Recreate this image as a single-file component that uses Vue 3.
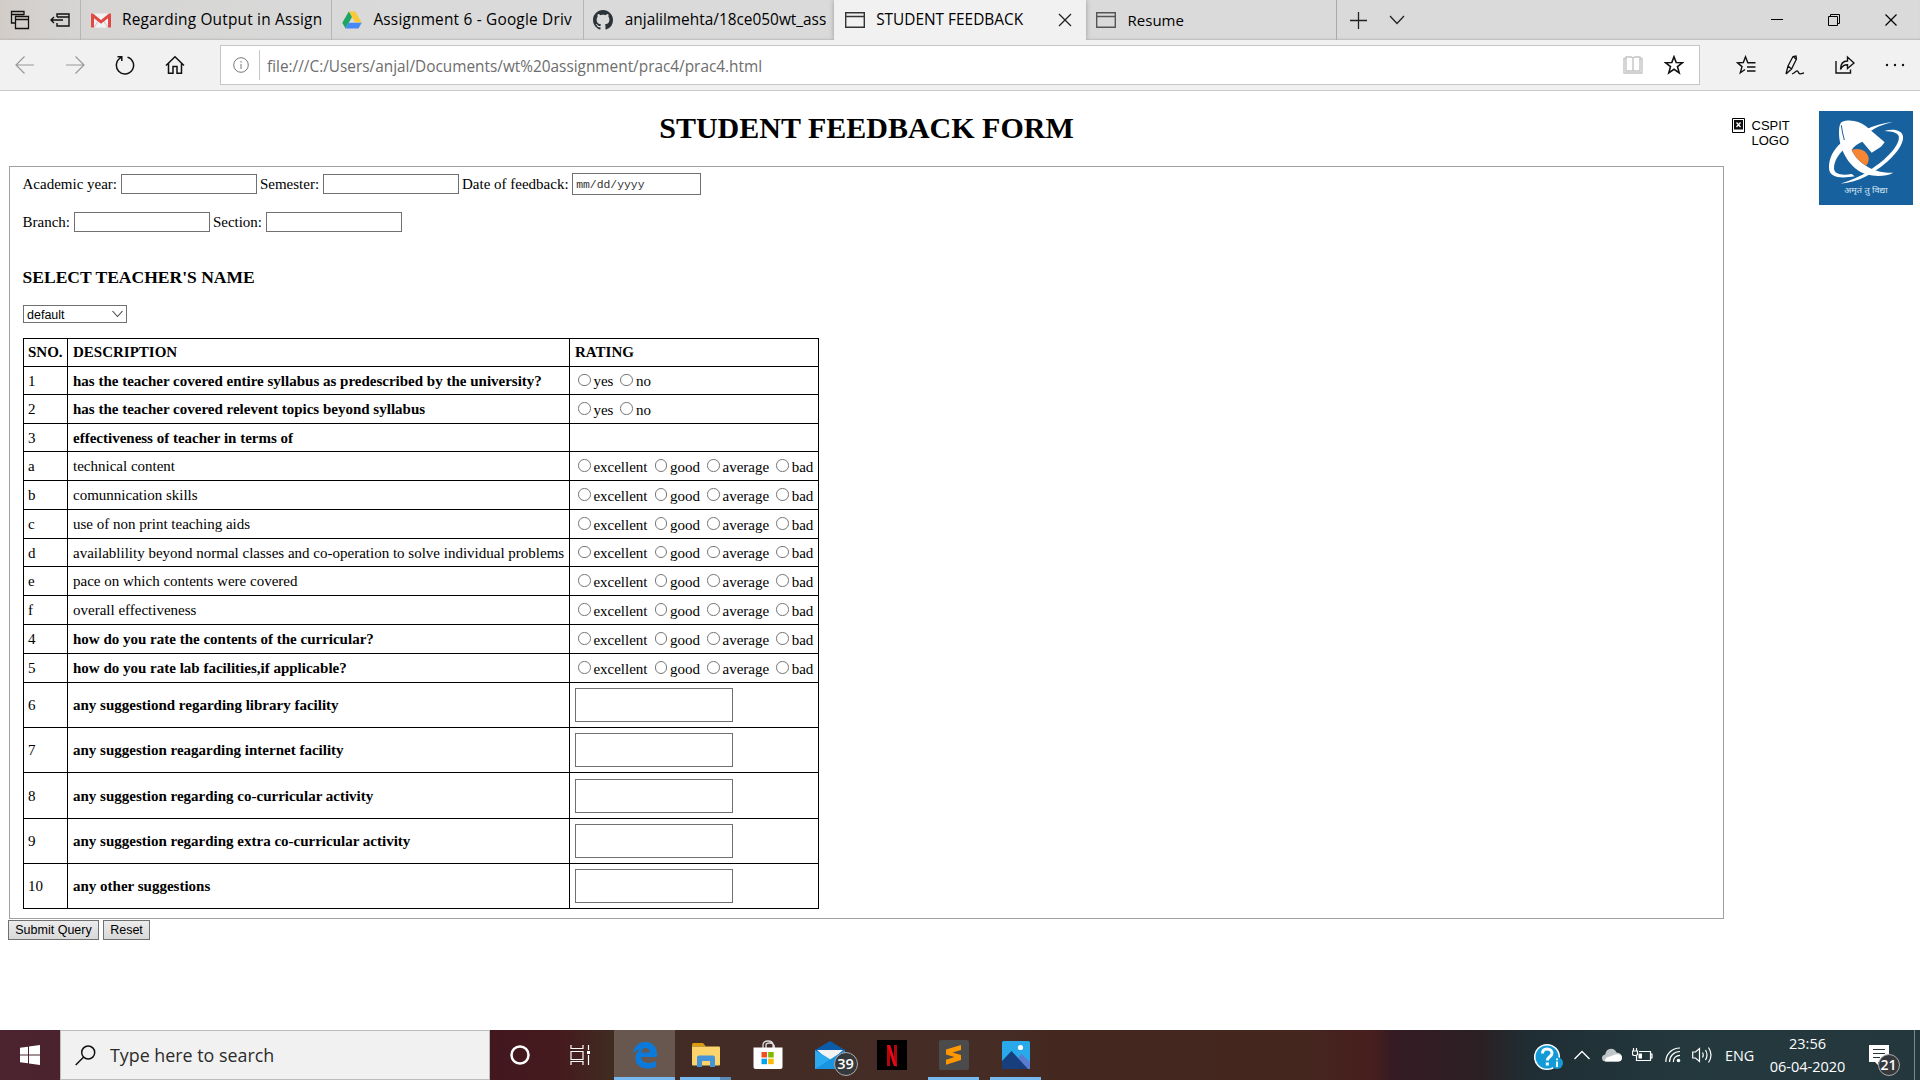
<script setup>
const four = ['excellent', 'good', 'average', 'bad']
const two = ['yes', 'no']
const rows = [
  { n: '1', t: 'has the teacher covered entire syllabus as predescribed by the university?', b: true, o: two, h: 28 },
  { n: '2', t: 'has the teacher covered relevent topics beyond syllabus', b: true, o: two, h: 29 },
  { n: '3', t: 'effectiveness of teacher in terms of', b: true, h: 28 },
  { n: 'a', t: 'technical content', o: four, h: 29 },
  { n: 'b', t: 'comunnication skills', o: four, h: 29 },
  { n: 'c', t: 'use of non print teaching aids', o: four, h: 29 },
  { n: 'd', t: 'availablility beyond normal classes and co-operation to solve individual problems', o: four, h: 28 },
  { n: 'e', t: 'pace on which contents were covered', o: four, h: 29 },
  { n: 'f', t: 'overall effectiveness', o: four, h: 29 },
  { n: '4', t: 'how do you rate the contents of the curricular?', b: true, o: four, h: 29 },
  { n: '5', t: 'how do you rate lab facilities,if applicable?', b: true, o: four, h: 29 },
  { n: '6', t: 'any suggestiond regarding library facility', b: true, area: true, h: 45 },
  { n: '7', t: 'any suggestion reagarding internet facility', b: true, area: true, h: 45 },
  { n: '8', t: 'any suggestion regarding co-curricular activity', b: true, area: true, h: 46 },
  { n: '9', t: 'any suggestion regarding extra co-curricular activity', b: true, area: true, h: 45 },
  { n: '10', t: 'any other suggestions', b: true, area: true, h: 45 },
]
</script>

<template>
  <div class="screen">
    <div class="tabbar">
      <div class="lead">
        <svg class="ic" width="20" height="20" viewBox="0 0 20 20" fill="none" stroke="#111" stroke-width="1.3"><path d="M5 13H1.500V1.500H14V5M1.500 4.500H14M5.500 6.500H18.500V18.500H5.500zM5.500 9.500H18.500" /></svg>
        <svg class="ic" width="20" height="14" viewBox="0 0 20 14" fill="none" stroke="#111" stroke-width="1.4"><path d="M7 4V1H19V13H7V10M7 4H19M1 7H13M4 4L1 7L4 10" /></svg>
      </div>
      <div class="tab">
        <svg class="fav" width="20" height="20" viewBox="0 0 20 20"><path d="M0 3.500H20V17.500H0z" fill="#f2f2f2" /><path d="M3 17.500L8 10M17 17.500L12 10" stroke="#d8b9b6" stroke-width="1" /><path d="M0 17.500V3.500H2L10 10L18 3.500H20V17.500H17V8.200L10 13.700L3 8.200V17.500z" fill="#e04a45" /></svg>
        <span class="tt t1">Regarding Output in Assign</span>
      </div>
      <div class="tab">
        <svg class="fav" width="20" height="20" viewBox="0 0 20 20"><path d="M6.800 1.500H13.200L19.700 12.500H13.200z" fill="#fbc934" /><path d="M6.800 1.500L10 7L3.500 18.500L.3 12.800z" fill="#1fa463" /><path d="M6.800 12.800H19.700L16.500 18.500H3.500z" fill="#4688f4" /></svg>
        <span class="tt t2">Assignment 6 - Google Driv</span>
      </div>
      <div class="tab">
        <svg class="fav" width="20" height="20" viewBox="0 0 16 16"><path fill="#2c3338" d="M8 0C3.580 0 0 3.580 0 8c0 3.540 2.290 6.530 5.470 7.590.4.070.55-.17.55-.38 0-.19-.01-.82-.01-1.490-2.010.37-2.530-.49-2.690-.94-.09-.23-.48-.94-.82-1.130-.28-.15-.68-.52-.01-.53.63-.01 1.080.58 1.230.82.72 1.210 1.870.87 2.330.66.07-.52.28-.87.510-1.070-1.780-.2-3.640-.89-3.640-3.950 0-.87.310-1.590.82-2.150-.08-.2-.36-1.020.08-2.120 0 0 .67-.21 2.200.82.640-.18 1.320-.27 2-.27s1.360.09 2 .27c1.530-1.040 2.200-.82 2.200-.82.440 1.100.160 1.920.08 2.120.510.560.82 1.270.82 2.150 0 3.070-1.870 3.750-3.650 3.950.29.25.54.73.54 1.480 0 1.070-.01 1.930-.01 2.200 0 .21.15.46.55.38A8.010 8.010 0 0 0 16 8c0-4.420-3.580-8-8-8z" /></svg>
        <span class="tt t3">anjalilmehta/18ce050wt_ass</span>
      </div>
      <div class="tab on">
        <svg class="fav" width="20" height="18" viewBox="0 0 20 18" fill="none" stroke="#333" stroke-width="1.400"><path d="M.7 1.700H19.300V16.300H.7zM.7 5.500H19.300" /></svg>
        <span class="tt t4">STUDENT FEEDBACK</span>
        <svg class="x" width="14" height="14" viewBox="0 0 14 14" stroke="#222" stroke-width="1.300"><path d="M1 1L13 13M13 1L1 13" /></svg>
      </div>
      <div class="tab">
        <svg class="fav" width="20" height="18" viewBox="0 0 20 18" fill="none" stroke="#555" stroke-width="1.400"><path d="M.7 1.700H19.300V16.300H.7zM.7 5.500H19.300" /></svg>
        <span class="tt t5">Resume</span>
      </div>
      <svg class="plus" width="17" height="17" viewBox="0 0 17 17" stroke="#222" stroke-width="1.300"><path d="M0 8.500H17M8.500 0V17" /></svg>
      <svg class="down" width="16" height="10" viewBox="0 0 16 10" fill="none" stroke="#222" stroke-width="1.300"><path d="M1 1L8 8.500L15 1" /></svg>
      <div class="win">
        <svg width="12" height="12" viewBox="0 0 12 12" stroke="#000"><path d="M0 5.500H12" /></svg>
        <svg width="12" height="12" viewBox="0 0 12 12" fill="none" stroke="#000"><path d="M.5 2.500H9.500V11.500H.5zM2.500 2.500V.5H11.500V9.500H9.500" /></svg>
        <svg width="12" height="12" viewBox="0 0 12 12" stroke="#000" stroke-width="1.200"><path d="M.5.5L11.500 11.500M11.500.5L.5 11.500" /></svg>
      </div>
    </div>

    <div class="toolbar">
      <div class="nav">
        <svg width="20" height="20" viewBox="0 0 20 20" fill="none" stroke="#999" stroke-width="1.200"><path d="M19 10H1M9.500 1.500L1 10L9.500 18.500" /></svg>
        <svg width="20" height="20" viewBox="0 0 20 20" fill="none" stroke="#999" stroke-width="1.200"><path d="M1 10H19M10.500 1.500L19 10L10.500 18.500" /></svg>
        <svg width="20" height="20" viewBox="0 0 20 20" fill="none" stroke="#111" stroke-width="1.500"><path d="M12.500 2.100A8.600 8.600 0 1 1 6 2.700M2.500 1.800H6.800V6" /></svg>
        <svg width="20" height="20" viewBox="0 0 20 20" fill="none" stroke="#111" stroke-width="1.500"><path d="M1 10.500L10 1.800L19 10.500M3.500 8.500V18.200H8V11.500H12V18.200H16.500V8.500" /></svg>
      </div>
      <div class="addr">
        <svg class="info" width="16" height="16" viewBox="0 0 16 16" fill="none" stroke="#777"><circle cx="8" cy="8" r="7.300" /><path d="M8 7V12M8 4V5.500" /></svg>
        <i class="sep"></i>
        <span class="url">file:///C:/Users/anjal/Documents/wt%20assignment/prac4/prac4.html</span>
        <svg class="book" width="20" height="18" viewBox="0 0 20 18" fill="none" stroke="#c4c4c4" stroke-width="1.400"><path d="M3 2.500V1H8.500L10 2.200L11.500 1H17V2.500M10 2.200V15.500M3 2.500H1V17H19V2.500H17V15H3V2.500" /></svg>
        <svg class="star" width="20" height="20" viewBox="0 0 20 20" fill="none" stroke="#111" stroke-width="1.600"><path d="M10 1.800L12.200 7.500L18.300 7.800L13.500 11.600L15.200 17.800L10 14.300L4.800 17.800L6.500 11.600L1.700 7.800L7.800 7.500z" /></svg>
      </div>
      <div class="acts">
        <svg width="20" height="20" viewBox="0 0 20 20" fill="none" stroke="#111" stroke-width="1.400"><path d="M19.500 7.800H11.800L9.500 1.800L7.300 7.500L1.500 7.800L6 11.600L4.300 17.800L9 14.500M11 12H19.500M11 16H19.500" /></svg>
        <svg width="20" height="20" viewBox="0 0 20 20" fill="none" stroke="#111" stroke-width="1.300"><path d="M1 19L3 11L8 1.500L11 1L11.500 4L6.500 14L1 19M8 1.500L11 4M3 11L6.500 14M7 19C10 18 11 15.500 12.500 16C14 17 13 18.500 15 18.800C17 19 17.500 18 19 18" /></svg>
        <svg width="20" height="20" viewBox="0 0 20 20" fill="none" stroke="#111" stroke-width="1.400"><path d="M1 6V18H15.500V14.500M5.500 14.500C5.500 9 8 6 12.500 6V2L19 8L12.500 13.500V9.800C9 9.800 7 11 5.500 14.500z" /></svg>
        <svg width="20" height="20" viewBox="0 0 20 20" fill="#111"><circle cx="2" cy="10" r="1.200" /><circle cx="10" cy="10" r="1.200" /><circle cx="18" cy="10" r="1.200" /></svg>
      </div>
    </div>

    <div class="page">
      <div class="main">
        <h1>STUDENT FEEDBACK FORM</h1>
        <div class="fs">
          <div class="line l1">Academic year:<i class="inp"></i>Semester:<i class="inp"></i>Date of feedback:<i class="inp date">mm/dd/yyyy</i></div>
          <div class="line l2">Branch:<i class="inp"></i>Section:<i class="inp"></i></div>
          <h3>SELECT TEACHER'S NAME</h3>
          <div class="select"><span>default</span><svg width="11" height="8" viewBox="0 0 11 8" fill="none" stroke="#444" stroke-width="1.100"><path d="M.5 1L5.500 6.500L10.500 1" /></svg></div>
          <table>
            <colgroup><col class="c1" /><col class="c2" /><col class="c3" /></colgroup>
            <tbody>
              <tr class="head"><td class="b">SNO.</td><td class="b">DESCRIPTION</td><td class="b">RATING</td></tr>
              <tr v-for="r in rows" :key="r.n" :style="{ height: r.h + 'px' }">
                <td>{{ r.n }}</td>
                <td :class="{ b: r.b }">{{ r.t }}</td>
                <td>
                  <div v-if="r.o" class="opts"><label v-for="o in r.o" :key="o"><i></i>{{ o }}</label></div>
                  <div v-if="r.area" class="area"></div>
                </td>
              </tr>
            </tbody>
          </table>
        </div>
        <div class="btns"><span class="btn b1">Submit Query</span><span class="btn b2">Reset</span></div>
      </div>
      <div class="broken">
        <svg width="13" height="15" viewBox="0 0 13 15"><path d="M.5.5H12.500V14.500H.5z" fill="#fff" stroke="#000" /><path d="M2 2H11V11.500H2z" fill="#111" /><path d="M4.500 4.500L8.500 9M8.500 4.500L4.500 9" stroke="#fff" stroke-width="1.300" /></svg>
        <div>CSPIT<br />LOGO</div>
      </div>
      <svg class="logo" width="94" height="94" viewBox="357 63 282 282">
        <path d="M357 63H639V345H357z" fill="#17629e" />
        <path d="M424 158C400 178 386 205 387 235C388 262 420 267 464 259L455 252C425 258 402 252 402 235C402 214 415 194 430 180z" fill="#fff" />
        <path d="M425 96C450 86 478 94 497 108L554 157L543 170L515 188L487 155C475 160 462 168 455 180C464 200 480 217 498 227C515 240 545 249 580 248C560 259 528 261 500 253C450 238 416 180 417 125C417 110 420 100 425 96z" fill="#fff" />
        <path d="M424 106Q427 130 433 150" stroke="#17629e" stroke-width="3" fill="none" />
        <path d="M455 180C478 171 500 182 506 203C507 214 503 222 498 227C480 217 464 200 455 180z" fill="#f58634" />
        <path d="M495 119C520 107 550 99 578 96C550 103 528 111 507 127zM553 123C580 115 606 120 609 139C613 172 560 227 500 258C475 271 448 279 421 281C450 272 480 261 510 240C560 208 602 164 596 138C592 127 575 124 553 123z" fill="#fff" />
        <text x="498" y="308" text-anchor="middle" font-size="22" fill="#d5e6f3" textLength="130" lengthAdjust="spacingAndGlyphs">अमृतं तु विद्या</text>
      </svg>
    </div>

    <div class="taskbar">
      <div class="start"><svg width="20" height="20" viewBox="0 0 20 20" fill="#fff"><path d="M0 2.800L8 1.700V9.500H0zM9 1.500L20 0V9.500H9zM0 10.500H8V18.300L0 17.200zM9 10.500H20V20L9 18.500z" /></svg></div>
      <div class="search">
        <svg width="21" height="21" viewBox="0 0 21 21" fill="none" stroke="#111" stroke-width="1.500"><circle cx="13.200" cy="7.500" r="6.500" /><path d="M8.500 12.200L.7 20" /></svg>
        <span>Type here to search</span>
      </div>
      <div class="cell s1"><svg width="20" height="20" viewBox="0 0 20 20" fill="none" stroke="#fff" stroke-width="2.500"><circle cx="10" cy="10" r="8.500" /></svg></div>
      <div class="cell s2"><svg width="21" height="20" viewBox="0 0 21 20" fill="none" stroke="#fff" stroke-width="1.200"><path d="M1 0V3.500H13V0M1 6.500H13V14.500H1zM1 20V16.500H13V20M18.500 0V5M18.500 10V20" /><path d="M17 6H20V9H17z" fill="#fff" stroke="none" /></svg></div>
      <div class="cell act"><svg width="26" height="28" viewBox="0 0 26 28"><path d="M1 13C2 5 7 1 13.500 1C21 1 25 6.500 25 13V16H9C9.500 20 13 22 17 22C20 22 22 21 24 20V25.500C21.500 27 19 27.500 15.500 27.500C8 27.500 3.500 23 3.500 17C3.500 13 5.500 10 9 8C5 8.500 2.500 10.500 1 13zM9.500 11.500H17.500C17.500 8.500 16 7 13.500 7C11 7 9.800 9 9.500 11.500z" fill="#0a7bdc" /></svg></div>
      <div class="cell run split"><svg width="28" height="24" viewBox="0 0 28 24"><path d="M0 1.500Q0 0 1.500 0H11L14 3.500H0z" fill="#dd9b10" /><path d="M0 3.500H27Q28 3.500 28 4.500V21.500Q28 22.500 27 22.500H1Q0 22.500 0 21.500z" fill="#fbd56b" /><path d="M5 24V14.500Q5 12.500 7 12.500H21Q23 12.500 23 14.500V24H18V18H10V24z" fill="#4394d8" /></svg></div>
      <div class="cell"><svg class="store" width="30" height="30" viewBox="0 0 30 30"><path d="M10 8V5Q10 1 15 1Q20 1 20 5V8M13 8V5Q13 3 16.500 3Q21.500 3 21.500 8" fill="none" stroke="#ddd" stroke-width="1.300" /><path d="M.5 7.500H29.500V27Q29.500 29 27.500 29H2.500Q.5 29 .5 27z" fill="#fff" /><path d="M8.500 12H14V17.500H8.500z" fill="#f25022" /><path d="M15.200 12H20.700V17.500H15.200z" fill="#7fba00" /><path d="M8.500 18.700H14V24.200H8.500z" fill="#00a4ef" /><path d="M15.200 18.700H20.700V24.200H15.200z" fill="#ffb900" /></svg></div>
      <div class="cell"><svg width="30" height="28" viewBox="0 0 30 28"><path d="M0 9L15 0L30 9V14H0z" fill="#0a5ca8" /><path d="M2 9H28L15 21z" fill="#f3f3f3" /><path d="M0 9L14 17.500L30 28H0z" fill="#2baaf0" /><path d="M30 9L0 28H30z" fill="#1a93e0" /></svg><b class="badge m">39</b></div>
      <div class="cell"><svg width="30" height="30" viewBox="0 0 30 30"><path d="M0 0H30V30H0z" fill="#000" /><path d="M10 5H13V26L10 26.300zM17 5H20V26.300L17 26z" fill="#b1060f" /><path d="M10 5H13.200L20 26.300L16.800 26z" fill="#e50914" /></svg></div>
      <div class="cell run"><svg width="30" height="30" viewBox="0 0 30 30"><rect width="30" height="30" rx="2" fill="#4b4b4b" /><path d="M7 9.500L22 5V10L13.500 12.500L22 15V20L7 24.700V19.700L15.500 17L7 14.500z" fill="#ff9800" /></svg></div>
      <div class="cell run"><svg width="28" height="28" viewBox="0 0 28 28"><rect width="28" height="28" rx="1.500" fill="#29a9ea" /><path d="M12 22L19.500 13L28 21V28H12z" fill="#5b7bd0" /><path d="M0 20L9.500 10L26 28H0z" fill="#173f7e" /><circle cx="18.500" cy="6.500" r="2.600" fill="#fff" /></svg></div>
      <div class="tray">
        <svg class="help" width="30" height="28" viewBox="0 0 30 28"><circle cx="13" cy="14" r="12.300" fill="#149bd7" stroke="#fff" stroke-width="1.600" /><path d="M8.500 10.500C8.500 7.500 10.500 6 13 6C16 6 18 7.800 18 10.300C18 13.500 13.300 13.800 13.300 17.500M13.300 19.500V22.500" fill="none" stroke="#fff" stroke-width="3" /><circle cx="23" cy="20" r="6" fill="#149bd7" /><path d="M23 18.500V24M23 15.500V17.300" stroke="#fff" stroke-width="1.800" /></svg>
        <svg class="up" width="16" height="10" viewBox="0 0 16 10" fill="none" stroke="#fff" stroke-width="1.300"><path d="M.5 9L8 1.500L15.500 9" /></svg>
        <svg class="cloud" width="20" height="14" viewBox="0 0 20 14"><path d="M4 13.500Q0 13.500 0 10Q0 7 3.200 6.500Q4 1 9 .7Q13 .7 14.500 4.500Q20 5 20 9.800Q20 13.500 16 13.500z" fill="#bfc6c8" /><path d="M3 13.200Q3 9 8 8.500L13 6.500Q20 5.500 20 10Q19.500 13.500 16 13.500H4z" fill="#fff" /></svg>
        <svg class="bat" width="21" height="14" viewBox="0 0 21 14" fill="none" stroke="#fff" stroke-width="1.200"><path d="M7 3.500H18.500V12.500H4.500V8M18.500 6H20V10H18.500M1.500 0V3M4.500 0V3M.5 3H5.500V6Q5.500 7.500 3 7.500Q.5 7.500.5 6z" /><path d="M6.500 5.500H10V10.500H6.500z" fill="#fff" stroke="none" /></svg>
        <svg class="wifi" width="16" height="16" viewBox="0 0 16 16" fill="none" stroke="#fff" stroke-width="1.200"><path d="M.8 15C.8 7 7 1 15 1M4.500 15C4.500 9 9 4.500 15 4.500M8.300 15C8.300 11 11 8.300 15 8.300" /><circle cx="13.500" cy="13.500" r="1.800" fill="#fff" stroke="none" /></svg>
        <svg class="spk" width="21" height="18" viewBox="0 0 21 18" fill="none" stroke="#fff" stroke-width="1.200"><path d="M.7 6H3.500L7.500 2.500V15.500L3.500 12H.7zM10.500 6.500Q12 9 10.500 11.500M13.500 4Q16.500 9 13.500 14M16.500 1.500Q21.500 9 16.500 16.500" /></svg>
        <span class="eng">ENG</span>
        <div class="clock"><span>23:56</span><span class="d">06-04-2020</span></div>
        <div class="note"><svg width="20" height="20" viewBox="0 0 20 20"><path d="M0 0H20V17H9V20L6 17H0z" fill="#fff" /><path d="M4 4.500H16M4 8.500H16M4 12.500H11" stroke="#24373c" stroke-width="1.200" /></svg><b class="badge n">21</b></div>
        <i class="desk"></i>
      </div>
    </div>
  </div>
</template>

<style>
body { margin: 0; overflow: hidden; }
</style>

<style scoped>
.screen { width: 1920px; height: 1080px; display: flex; flex-direction: column; background: #fff; overflow: hidden; font-family: "Open Sans", "Noto Sans", sans-serif; color: #000; }
svg { display: block; flex: none; }
i { font-style: normal; }
.tabbar { height: 40px; flex: none; display: flex; align-items: center; background: linear-gradient(90deg, #d2cdc9 0, #d6d5d4 80px, #dadada 400px); box-shadow: inset 0 -2px 2px -1px #bbb; }
.lead { width: 80px; display: flex; align-items: center; box-sizing: border-box; padding-left: 10px; gap: 20px; }
.tab { width: 251.400px; height: 40px; box-sizing: border-box; border-left: 1px solid #b5b5b5; padding-left: 9.500px; display: flex; align-items: center; }
.tab:nth-last-of-type(2) { border-right: 1px solid #aaa; }
.tab.on { background: #f1f1f1; border-color: #f1f1f1; box-shadow: 0 0 5px #999; clip-path: inset(0 -6px 0 -6px); }
.tab.on + .tab { border-left-color: transparent; }
.tt { margin: -1px 0 0 11.500px; width: 204px; font-size: 15.400px; line-height: 24px; white-space: nowrap; }
.t1 { letter-spacing: .2px; }
.t2 { letter-spacing: .2px; }
.t5 { font-size: 15px; }
.tab.on .tt { width: 171px; }
.x { margin-left: 11px; }
.plus { margin-left: 13.500px; margin-top: 1px; }
.down { margin-left: 22px; }
.win { margin-left: auto; margin-right: 23px; display: flex; gap: 45px; }
.toolbar { height: 51px; flex: none; box-sizing: border-box; background: #f1f1f1; border-bottom: 1px solid #c9c9c9; display: flex; align-items: center; }
.nav { width: 220px; box-sizing: border-box; padding-left: 15px; display: flex; gap: 30px; }
.addr { width: 1480px; height: 40px; box-sizing: border-box; border: 1px solid #c6c6c6; background: #fff; display: flex; align-items: center; }
.info { margin-left: 12px; }
.sep { width: 1px; height: 30px; background: #c6c6c6; margin-left: 10px; }
.url { margin: 2px 0 0 7px; font-size: 15.370px; color: #6d6d6d; white-space: nowrap; }
.book { margin-left: auto; }
.star { margin: 0 15px 0 21px; }
.acts { margin-left: 35.500px; display: flex; gap: 29.700px; }
.page { flex: 1; min-height: 0; display: flex; align-items: flex-start; font-family: "Liberation Serif", serif; font-size: 15px; }
.main { width: 1724px; flex: none; }
h1 { margin: 20px 0 0 9px; font-size: 30px; line-height: 34px; text-align: center; padding-left: 0; }
.fs { margin: 21px 0 0 9px; width: 1715px; height: 753px; box-sizing: border-box; border: 1px solid #a0a0a0; padding-left: 12.500px; }
.line { display: flex; align-items: center; white-space: pre; }
.l1 { height: 22px; margin-top: 6px; }
.l2 { height: 20px; margin-top: 17px; }
.inp { width: 136px; height: 20px; box-sizing: border-box; border: 1px solid #707070; margin: 0 3.300px 0 3.600px; }
.date { width: 129px; height: 22px; font: 11.400px/23px "Liberation Mono", monospace; padding-left: 3px; color: #333; }
h3 { margin: 35px 0 0; font-size: 17.550px; line-height: 20px; }
.select { margin: 18px 0 0 .500px; width: 104px; height: 18px; box-sizing: border-box; border: 1px solid #707070; display: flex; align-items: center; justify-content: space-between; padding: 0 3px 0 3px; font: 12.500px "Liberation Sans", sans-serif; }
.select span { padding-top: 1px; }
table { margin: 15px 0 0 .500px; border-collapse: collapse; table-layout: fixed; width: 796px; }
.c1 { width: 44px; }
.c2 { width: 502px; }
.c3 { width: 249px; }
td { border: 1px solid #000; padding: 0 0 0 5px; line-height: 17px; vertical-align: middle; white-space: nowrap; }
td:first-child { padding-left: 4px; }
tr:not(.head) td { padding-top: 1px; }
.head { height: 28px; }
.b { font-weight: bold; }
.opts { display: flex; gap: 7.100px; padding-left: 3px; position: relative; top: .500px; }
label { display: flex; align-items: center; gap: 2.900px; }
label i { width: 12.500px; height: 12.500px; box-sizing: border-box; border: 1px solid #777; border-radius: 50%; position: relative; top: -1.500px; }
.area { width: 158px; height: 34px; box-sizing: border-box; border: 1px solid #707070; margin-top: -1px; }
.btns { display: flex; gap: 4px; margin: 1px 0 0 8px; }
.btn { box-sizing: border-box; height: 20px; border: 1px solid #707070; background: linear-gradient(#ececec, #d8d8d8); font: 12.500px/18px "Liberation Sans", sans-serif; text-align: center; }
.b1 { width: 91px; }
.b2 { width: 47px; }
.broken { margin: 27px 0 0 8px; width: 87px; display: flex; gap: 6.500px; font: 13px/15px "Liberation Sans", sans-serif; }
.logo { margin-top: 20px; font-family: "Noto Sans", sans-serif; }
.taskbar { height: 50px; flex: none; display: flex; align-items: center; color: #fff; background: linear-gradient(90deg, #4b2430 0, #42181f 490px, #451a1e 560px, #402b21 610px, #432c25 700px, #452d26 1000px, #442820 1050px, #44261f 1300px, #481f1e 1372px, #351b23 1392px, #2b2023 1480px, #1f2e34 1530px, #24393e 1700px, #24373c 1920px); }
.start { width: 60px; display: flex; justify-content: center; }
.search { width: 430px; height: 50px; box-sizing: border-box; border: 1px solid #bcbcbc; background: #f1f1f1; display: flex; align-items: center; padding-left: 14px; color: #2b2b2b; font-size: 17.850px; white-space: nowrap; }
.search span { margin-left: 14px; }
.cell { width: 62px; height: 50px; display: flex; align-items: center; justify-content: center; position: relative; }
.cell.s1 { width: 60px; }
.cell.s2 { width: 60px; margin-right: 4px; }
.act { width: 61px; background: #68574f; box-shadow: inset 0 -3px #76b9f0; }
.run::after { content: ""; position: absolute; bottom: 0; left: 5px; width: 51px; height: 3px; background: #76b9f0; }
.split::after { background: linear-gradient(90deg, #76b9f0 40px, #5a8bb5 40px); }
.store { margin-bottom: 1px; }
.badge { position: absolute; box-sizing: border-box; border-radius: 50%; border: 1px solid #aaa; background: #35393b; text-align: center; color: #fff; font-weight: 600; }
.m { left: 34.500px; top: 22px; width: 24px; height: 24px; font-size: 14.500px; line-height: 21px; }
.tray { margin-left: auto; width: 386px; height: 50px; display: flex; align-items: center; }
.help { margin-top: 3px; }
.up { margin-left: 10px; }
.cloud { margin-left: 12px; }
.bat { margin-left: 9.500px; }
.wifi { margin-left: 12px; }
.spk { margin-left: 11px; }
.eng { margin-left: 12.500px; width: 28px; font-size: 14.400px; }
.clock { margin-left: 14.500px; width: 80px; display: flex; flex-direction: column; align-items: center; font-size: 14.500px; line-height: 23px; white-space: nowrap; }
.note { margin-left: 21px; width: 34px; position: relative; }
.n { left: 9px; top: 9px; width: 22px; height: 22px; font-size: 14px; line-height: 19px; }
.desk { margin-left: 11px; width: 1px; height: 50px; background: #7b878a; }
</style>
